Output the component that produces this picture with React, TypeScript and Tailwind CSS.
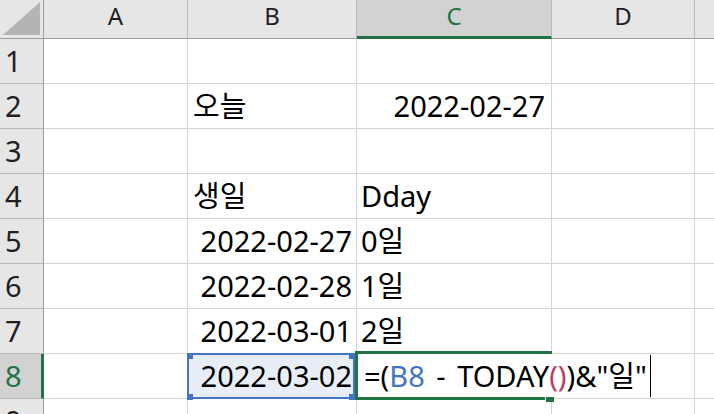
import React from "react";

const HDR = "bg-[#e6e6e6] border-r border-b border-r-[#b9b9b9] border-b-[#9e9e9e] flex items-end justify-center pb-[10px] text-[24px] leading-none text-[#1f1f1f]";
const HDR_SEL = "bg-[#d2d2d2] border-r border-b-[3px] border-r-[#b9b9b9] border-b-[#217346] flex items-end justify-center pb-[8px] text-[24px] leading-none text-[#217346]";
const RH = "bg-[#e6e6e6] border-r border-b border-r-[#9e9e9e] border-b-[#b9b9b9] flex items-end pl-[5px] pb-[8px] text-[29px] leading-none text-[#1f1f1f]";
const RH_SEL = "bg-[#d2d2d2] border-r-[3px] border-b border-r-[#217346] border-b-[#b9b9b9] flex items-end pl-[5px] pb-[8px] text-[29px] leading-none text-[#217346]";
const CELL = "border-r border-b border-[#d4d4d4] flex items-end pb-[8px] text-[29px] leading-none whitespace-nowrap";

type Row = { b?: React.ReactNode; bRight?: boolean; c?: React.ReactNode; cRight?: boolean };

const rows: Row[] = [
  {},
  { b: "오늘", c: "2022-02-27", cRight: true },
  {},
  { b: "생일", c: "Dday" },
  { b: "2022-02-27", bRight: true, c: "0일" },
  { b: "2022-02-28", bRight: true, c: "1일" },
  { b: "2022-03-01", bRight: true, c: "2일" },
  {},
  {},
];

function Formula() {
  return (
    <span className="relative z-10 [word-spacing:4px]">
      =(<span className="text-[#4472c4]">B8</span> - TODAY
      <span className="text-[#b8405e]">()</span>)&amp;"일"
    </span>
  );
}

export default function App() {
  return (
    <div className="relative w-[714px] h-[414px] overflow-hidden bg-white text-black font-['Noto_Sans','Noto_Sans_CJK_KR',sans-serif]">
      <div className="grid grid-cols-[44px_144px_169px_195px_143px_60px] grid-rows-[39px_repeat(9,45px)]">
        {/* header row */}
        <div className="bg-[#e6e6e6] border-r border-b border-r-[#9e9e9e] border-b-[#9e9e9e] relative">
          <svg width="43" height="38" className="absolute left-0 top-0">
            <polygon points="3,35 40,35 40,2" fill="#b4b4b4" />
          </svg>
        </div>
        <div className={HDR}>A</div>
        <div className={HDR}>B</div>
        <div className={HDR_SEL}>C</div>
        <div className={HDR}>D</div>
        <div className={HDR}></div>

        {rows.map((r, i) => {
          const n = i + 1;
          const sel = n === 8;
          return (
            <React.Fragment key={n}>
              <div className={sel ? RH_SEL : RH}>{n}</div>
              <div className={CELL}></div>
              {sel ? (
                <div className={`${CELL} relative bg-[#e8eef8] justify-end pr-[4px]`}>
                  2022-03-02
                  {/* reference highlight */}
                  <div className="absolute -left-px -top-px w-[168px] h-[46px] border-2 border-[#4472c4]">
                    <div className="absolute -left-[2px] -top-[2px] w-[6px] h-[6px] bg-[#4472c4]" />
                    <div className="absolute -right-[2px] -top-[2px] w-[6px] h-[6px] bg-[#4472c4]" />
                    <div className="absolute -left-[2px] -bottom-[3px] w-[6px] h-[6px] bg-[#4472c4]" />
                    <div className="absolute -right-[2px] -bottom-[3px] w-[6px] h-[6px] bg-[#4472c4]" />
                  </div>
                </div>
              ) : (
                <div className={`${CELL} ${r.bRight ? "justify-end pr-[4px]" : "pl-[5px]"}`}>{r.b}</div>
              )}
              {sel ? (
                <div className={`${CELL} relative z-10 border-r-white pl-[7px] overflow-visible`}>
                  <Formula />
                  {/* edit border */}
                  <div className="absolute -left-[2px] -top-[3px] w-[197px] h-[49px] border-t-[3px] border-l-[3px] border-[#217346]">
                    <div className="absolute -left-[3px] bottom-0 w-[190px] h-[3px] bg-[#217346]" />
                    <div className="absolute left-[188px] -bottom-[2px] w-[8px] h-[5px] bg-[#217346]" />
                  </div>
                  {/* text cursor */}
                  <div className="absolute left-[293px] top-[1px] w-px h-[42px] bg-black" />
                </div>
              ) : (
                <div className={`${CELL} ${r.cRight ? "justify-end pr-[6px]" : "pl-[4px]"}`}>{r.c}</div>
              )}
              <div className={CELL}></div>
              <div className={CELL}></div>
            </React.Fragment>
          );
        })}
      </div>
    </div>
  );
}
